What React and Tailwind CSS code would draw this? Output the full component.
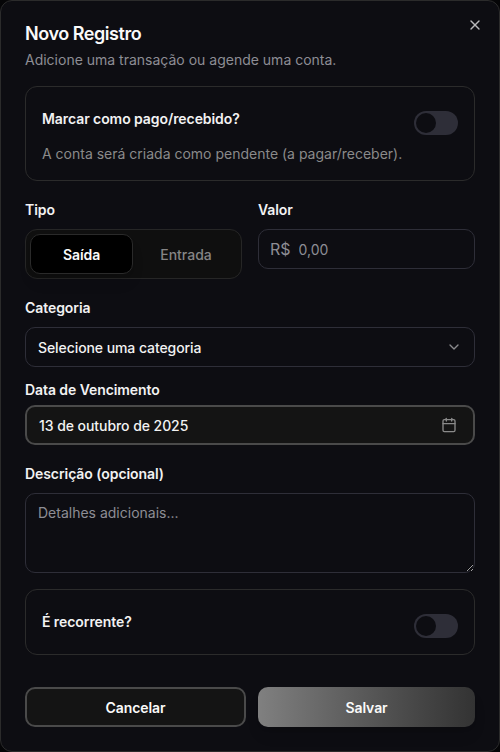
import React from 'react';
import { X, ChevronDown, Calendar } from 'lucide-react';

function Toggle({ label }) {
  return (
    <button
      type="button"
      role="switch"
      aria-checked="false"
      aria-label={label}
      className="flex h-6 w-11 shrink-0 items-center rounded-full bg-[#2e2e38] p-0.5"
    >
      <span className="h-5 w-5 rounded-full bg-[#0d0d12]" />
    </button>
  );
}

function Label({ children }) {
  return (
    <div className="h-5 text-sm leading-5 font-semibold tracking-[-0.075px] text-[#f2f2f2]">{children}</div>
  );
}

export default function App() {
  return (
    <div className="h-[752px] w-[500px] bg-[#050507] font-['Inter',sans-serif]">
      <div className="flex h-full flex-col rounded-xl border border-[#2b2b2b] bg-[#0d0d12] px-6 pt-6 pb-6">
        <header className="flex h-[61px] justify-between">
          <div>
            <h1 className="h-[18px] text-lg leading-[18px] font-semibold tracking-tight text-[#fafafa]">
              Novo Registro
            </h1>
            <p className="mt-[7px] text-sm leading-5 text-[#8d8d95]">
              Adicione uma transação ou agende uma conta.
            </p>
          </div>
          <button type="button" aria-label="Fechar" className="-mt-2 -mr-2 h-4 w-4 text-[#b9b9bb]">
            <X size={16} strokeWidth={2} />
          </button>
        </header>

        <section className="h-[95px] shrink-0 rounded-xl border border-[#2b2b2b] px-4 pt-[22px]">
          <div className="flex justify-between">
            <Label>Marcar como pago/recebido?</Label>
            <div className="pt-0.5">
              <Toggle label="Marcar como pago/recebido?" />
            </div>
          </div>
          <p className="mt-[9px] text-sm leading-5 text-[#8a8a8a]">
            A conta será criada como pendente (a pagar/receber).
          </p>
        </section>

        <div className="mt-[19px] grid grid-cols-2 gap-4">
          <div>
            <Label>Tipo</Label>
            <div className="mt-[9px] grid h-[50px] grid-cols-[103px_1fr] rounded-xl border border-[#262626] bg-[#0f0f0f] p-1">
              <button
                type="button"
                className="rounded-[10px] border border-[#2a2a2a] bg-black pt-0.5 text-sm font-semibold tracking-[-0.075px] text-[#fafafa] shadow-lg"
              >
                Saída
              </button>
              <button type="button" className="pt-0.5 pl-0.5 text-sm font-medium text-[#858585]">
                Entrada
              </button>
            </div>
          </div>
          <div>
            <Label>Valor</Label>
            <div className="mt-[9px] flex h-10 items-center gap-2 rounded-[10px] border border-[#2e2e38] px-[11px] text-[#8d8d95]">
              <span className="text-base leading-6">R$</span>
              <input
                placeholder="0,00"
                className="w-full min-w-0 bg-transparent pt-0.5 text-sm leading-5 outline-none placeholder:text-[#8d8d95]"
              />
            </div>
          </div>
        </div>

        <div className="mt-[19px]">
          <Label>Categoria</Label>
          <button
            type="button"
            className="mt-[9px] flex h-10 w-full items-center justify-between rounded-[10px] border border-[#2e2e38] px-3 text-sm font-medium tracking-[-0.08px] text-[#f2f2f2]"
          >
            <span className="pt-0.5">Selecione uma categoria</span>
            <ChevronDown size={16} className="text-[#8a8a8d]" />
          </button>
        </div>

        <div className="mt-[13px]">
          <Label>Data de Vencimento</Label>
          <button
            type="button"
            className="mt-[5px] flex h-10 w-full items-center justify-between rounded-[10px] border-2 border-[#4a4a4a] bg-[#141414] pr-4 pl-3 text-sm font-medium tracking-[-0.06px] text-[#f2f2f2]"
          >
            <span className="pt-0.5">13 de outubro de 2025</span>
            <Calendar size={16} className="text-[#8a8a8a]" />
          </button>
        </div>

        <div className="mt-[19px]">
          <Label>Descrição (opcional)</Label>
          <textarea
            placeholder="Detalhes adicionais..."
            className="mt-[9px] block h-20 w-full rounded-[10px] border border-[#2e2e38] bg-transparent px-3 py-[9px] text-sm leading-5 outline-none placeholder:text-[#8d8d95]"
          />
        </div>

        <section className="mt-4 flex h-[66px] shrink-0 justify-between rounded-xl border border-[#2b2b2b] px-4 pt-[22px]">
          <Label>É recorrente?</Label>
          <div className="pt-0.5">
            <Toggle label="É recorrente?" />
          </div>
        </section>

        <footer className="mt-8 flex gap-3 text-sm font-semibold tracking-[-0.075px] text-[#fafafa]">
          <button type="button" className="h-10 w-[221px] rounded-[10px] border-2 border-[#4a4a4a] bg-[#141414] pt-0.5">
            Cancelar
          </button>
          <button
            type="button"
            className="h-10 flex-1 rounded-[10px] bg-linear-to-r from-[#808080] to-[#333333] pt-0.5 shadow-lg"
          >
            Salvar
          </button>
        </footer>
      </div>
    </div>
  );
}
